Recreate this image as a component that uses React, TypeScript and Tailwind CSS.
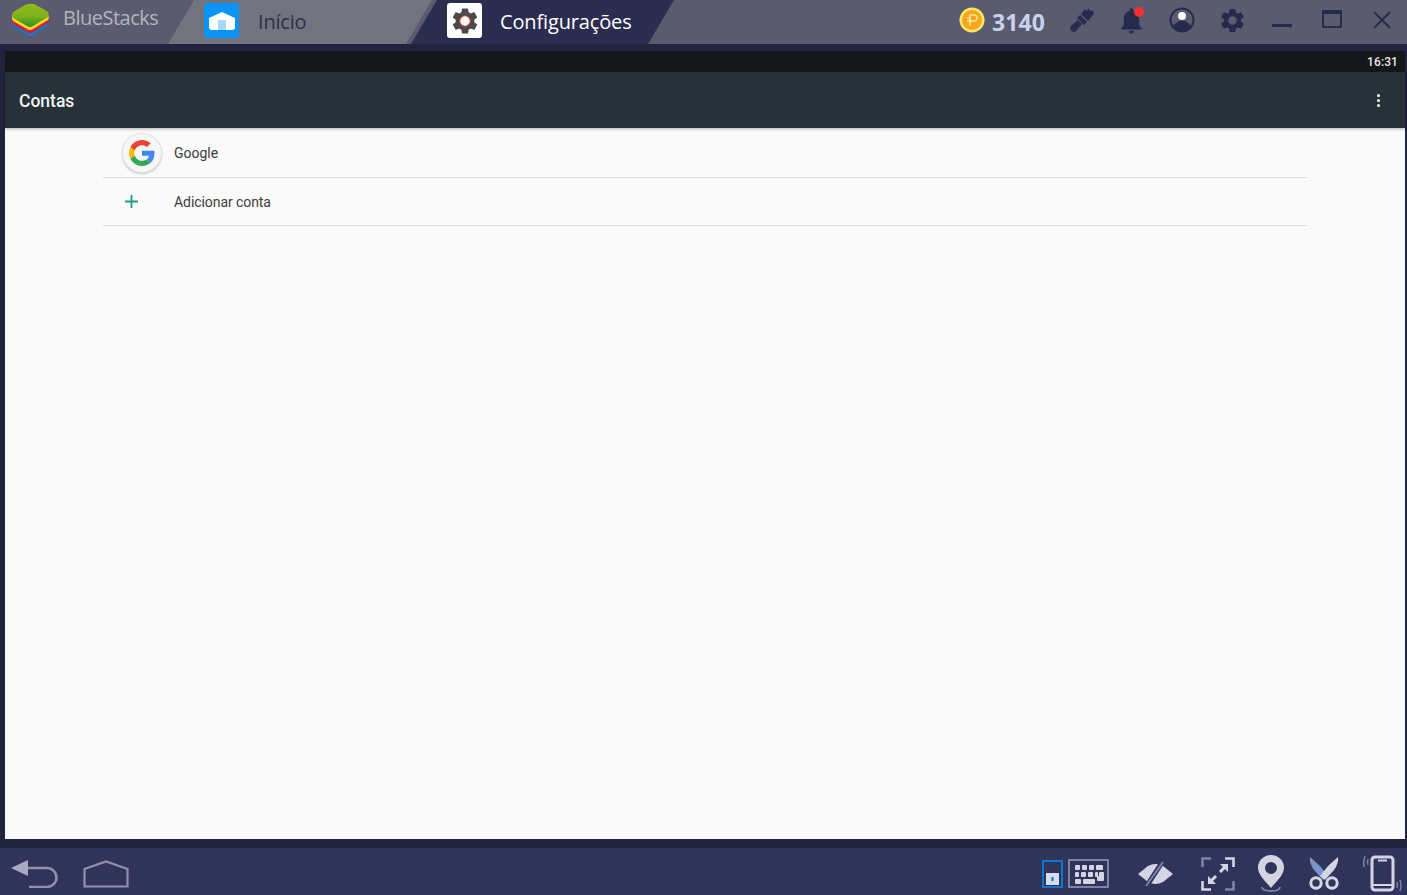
import { MdSettings, MdNotifications } from 'react-icons/md';

// ============================================
// Title bar drawings
// ============================================

const stackLayer = 'M2 9 L14 2 Q18 0 23 1 L36 8 Q39 11 37 14 L22 23 Q19 25 16 23 L2 15 Q0 12 2 9 Z';

function StackLogo() {
  return (
    <svg width="40" height="34" viewBox="0 0 40 34" className="shrink-0">
      <defs>
        <linearGradient id="stackTop" x1="0" y1="0" x2="0" y2="1">
          <stop offset="0" stopColor="#8fbb1c" />
          <stop offset="0.55" stopColor="#7cb01d" />
          <stop offset="1" stopColor="#2f8f22" />
        </linearGradient>
      </defs>
      <path d={stackLayer} transform="translate(0 9)" fill="#1577c4" />
      <path d={stackLayer} transform="translate(0 6)" fill="#e2183a" />
      <path d={stackLayer} transform="translate(0 3)" fill="#f6dc1c" />
      <path d={stackLayer} fill="url(#stackTop)" />
    </svg>
  );
}

function HomeTile() {
  return (
    <div className="mb-[3px] flex h-[35px] w-[35px] shrink-0 items-center justify-center rounded-[3px] bg-[#0a94f5]">
      <svg width="26" height="18" viewBox="0 0 26 18">
        <path d="M0 6 L13 0 L26 6 V15 Q26 18 23 18 H3 Q0 18 0 15 Z" fill="#fff" />
        <rect x="9" y="8" width="8" height="10" fill="#a6d8fa" />
      </svg>
    </div>
  );
}

function GearTile() {
  return (
    <div className="mb-[3px] flex h-[35px] w-[35px] shrink-0 items-center justify-center rounded-[3px] bg-white">
      <svg width="30" height="30" viewBox="0 0 24 24">
        <path
          fill="#4a4a4a"
          d="M19.43 12.98c.04-.32.07-.64.07-.98s-.03-.66-.07-.98l2.11-1.65c.19-.15.24-.42.12-.64l-2-3.46c-.12-.22-.39-.3-.61-.22l-2.49 1c-.52-.4-1.08-.73-1.69-.98l-.38-2.65C14.46 2.18 14.25 2 14 2h-4c-.25 0-.46.18-.49.42l-.38 2.65c-.61.25-1.17.59-1.69.98l-2.49-1c-.23-.09-.49 0-.61.22l-2 3.46c-.13.22-.07.49.12.64l2.11 1.65c-.04.32-.07.65-.07.98s.03.66.07.98l-2.11 1.65c-.19.15-.24.42-.12.64l2 3.46c.12.22.39.3.61.22l2.49-1c.52.4 1.08.73 1.69.98l.38 2.65c.03.24.24.42.49.42h4c.25 0 .46-.18.49-.42l.38-2.65c.61-.25 1.17-.59 1.69-.98l2.49 1c.23.09.49 0 .61-.22l2-3.46c.12-.22.07-.49-.12-.64l-2.11-1.65z"
        />
        <circle cx="12" cy="12" r="4.2" fill="#fff" stroke="#e0392f" strokeWidth="0.9" />
      </svg>
    </div>
  );
}

function Coin() {
  return (
    <svg width="26" height="26" viewBox="0 0 26 26" className="mb-1 shrink-0">
      <circle cx="13" cy="13" r="12.5" fill="#fbe85c" />
      <circle cx="13" cy="13" r="10" fill="#f4a623" />
      <path d="M11 19 V8 H15 A3 3 0 0 1 15 14 H8 M8 11 H11" fill="none" stroke="#fde98a" strokeWidth="1.6" />
    </svg>
  );
}

function Brush() {
  return (
    <svg width="26" height="26" viewBox="0 0 26 26" fill="#262a4d">
      <path d="M2 19 L9 13 L13 17 L7 24 Q5 26 2.500 24 Q0 21.500 2 19 Z" />
      <path d="M8 11 L11 8 L18 15 L15 18 Z" />
      <path d="M12 7 L16 2 L17.500 4 L19.500 1.500 L21 4 L23 3 L25 6 L24 8 L19 14 Z" />
    </svg>
  );
}

function Profile() {
  return (
    <svg width="26" height="26" viewBox="0 0 26 26">
      <circle cx="13" cy="13" r="11.5" fill="none" stroke="#262a4d" strokeWidth="2" />
      <path d="M4 19 Q13 8 22 19 Q18 24 13 24 Q8 24 4 19 Z" fill="#262a4d" />
      <circle cx="13" cy="9" r="4" fill="#fff" />
    </svg>
  );
}

const titleIconBox = 'flex h-11 w-[50px] shrink-0 items-center justify-center pb-1';

// ============================================
// Bottom bar drawings
// ============================================

function BackKey() {
  return (
    <svg width="48" height="28" viewBox="0 0 48 28" fill="none">
      <path d="M0 8 L17 0 V16 Z" fill="#a9acc0" />
      <path d="M17 8 H36 A9.5 9.5 0 0 1 36 27 H18" stroke="#8f92aa" strokeWidth="2.5" />
    </svg>
  );
}

function HomeKey() {
  return (
    <svg width="46" height="28" viewBox="0 0 46 28" fill="none">
      <path d="M1.5 26.5 V9 L23 1.500 L44.500 9 V26.500 Z" stroke="#8f92aa" strokeWidth="2.2" />
    </svg>
  );
}

function ImeToggle() {
  return (
    <svg width="21" height="28" viewBox="0 0 21 28">
      <rect x="1" y="1" width="19" height="26" fill="#30345a" stroke="#0a76d0" strokeWidth="2" />
      <rect x="4" y="13" width="13" height="12" fill="#d6dcec" />
      <rect x="9.500" y="17" width="2" height="4" fill="#0a76d0" />
    </svg>
  );
}

function KeyboardIcon() {
  const keys = [
    [7, 6, 5], [14, 6, 5], [21, 6, 5], [28, 6, 7],
    [7, 13, 4], [13, 13, 5], [20, 13, 5], [27, 13, 3],
    [7, 20, 6], [15, 20, 12], [31, 13, 5], [29, 17, 7],
  ];
  return (
    <svg width="41" height="29" viewBox="0 0 41 29">
      <rect x="1" y="1" width="39" height="27" fill="none" stroke="#7a84a8" strokeWidth="2" />
      {keys.map(([x, y, w]) => (
        <rect key={`${x}-${y}`} x={x} y={y} width={w} height="5" rx="1" fill="#d3d6e2" />
      ))}
    </svg>
  );
}

function EyeOff() {
  return (
    <svg width="35" height="26" viewBox="0 0 35 26">
      <path d="M0 13 L10 5 Q17.500 1 25 5 L35 13 L25 21 Q17.500 25 10 21 Z" fill="#d3d6e2" />
      <path d="M8 26 L25 0" stroke="#30345a" strokeWidth="5" />
      <path d="M8 25 L25 1" stroke="#7a84a8" strokeWidth="2" />
    </svg>
  );
}

function FullscreenIcon() {
  return (
    <svg width="34" height="34" viewBox="0 0 34 34" fill="none" strokeWidth="2.6">
      <path d="M10 1.500 H1.500 V10" stroke="#7a84a8" />
      <path d="M24 1.500 H32.500 V10" stroke="#d3d6e2" />
      <path d="M10 32.500 H1.500 V24" stroke="#d3d6e2" />
      <path d="M24 32.500 H32.500 V24" stroke="#7a84a8" />
      <path d="M19 15 L24 10" stroke="#d3d6e2" strokeWidth="3" />
      <path d="M19 7 H27 V15 Z" fill="#d3d6e2" />
      <path d="M15 19 L10 24" stroke="#d3d6e2" strokeWidth="3" />
      <path d="M7 19 V27 H15 Z" fill="#d3d6e2" />
    </svg>
  );
}

function PinIcon() {
  return (
    <svg width="26" height="37" viewBox="0 0 26 37">
      <path
        fillRule="evenodd"
        fill="#d3d6e2"
        d="M13 0 C5.800 0 0 5.600 0 12.600 C0 20 8 27 13 33 C18 27 26 20 26 12.600 C26 5.600 20.200 0 13 0 Z M13 7 A6 6 0 1 1 13 19 A6 6 0 1 1 13 7 Z"
      />
      <path d="M4 32 Q4 36 13 36 Q22 36 22 32" fill="none" stroke="#7a84a8" strokeWidth="1.800" />
    </svg>
  );
}

function ScissorsIcon() {
  return (
    <svg width="32" height="33" viewBox="0 0 32 33" fill="none">
      <path d="M2 0 L12 9 L20 19 L15 23 L6 13 Q1 6 2 0 Z" fill="#7a95c8" />
      <path d="M30 0 Q31 6 26 13 L17 23 L12 19 L20 9 Z" fill="#d3d6e2" />
      <circle cx="8" cy="26" r="5.200" stroke="#d3d6e2" strokeWidth="3" />
      <circle cx="24" cy="26" r="5.200" stroke="#d3d6e2" strokeWidth="3" />
    </svg>
  );
}

function ShakeIcon() {
  return (
    <svg width="41" height="37" viewBox="0 0 41 37" fill="none">
      <rect x="10" y="2" width="21" height="33" rx="3" stroke="#d3d6e2" strokeWidth="3" />
      <path d="M16 5.500 H25 M10 30 H31" stroke="#d3d6e2" strokeWidth="1.800" />
      <path d="M3 1 Q1 6 2 12 M6 4 Q5 7 6 10" stroke="#7a84a8" strokeWidth="1.500" />
      <path d="M38 25 Q40 30 38 36 M35 27 Q36 30 35 33" stroke="#7a84a8" strokeWidth="1.500" />
    </svg>
  );
}

function GoogleBadge() {
  return (
    <div className="flex h-10 w-10 shrink-0 items-center justify-center rounded-full border border-[#e4e4e4] bg-[#f6f6f6] shadow-[0_1px_2px_rgba(0,0,0,0.2)]">
      <svg width="26" height="26" viewBox="0 0 48 48">
        <path fill="#EA4335" d="M24 9.500c3.500 0 6.700 1.200 9.200 3.600l6.900-6.900C35.900 2.400 30.500 0 24 0 14.600 0 6.500 5.400 2.600 13.200l8 6.200C12.500 13.700 17.800 9.500 24 9.500z" />
        <path fill="#4285F4" d="M47 24.500c0-1.600-.1-3.100-.4-4.500H24v9h13c-.6 3-2.300 5.500-4.800 7.200l7.700 6C44.400 38.500 47 32 47 24.500z" />
        <path fill="#FBBC05" d="M10.500 28.600c-.5-1.400-.8-3-.8-4.600s.3-3.200.8-4.600l-8-6.200C.9 16.500 0 20.100 0 24s.9 7.500 2.600 10.800l7.900-6.200z" />
        <path fill="#34A853" d="M24 48c6.500 0 11.900-2.100 15.900-5.800l-7.700-6c-2.200 1.500-4.900 2.300-8.200 2.300-6.200 0-11.500-4.200-13.400-9.900l-8 6.200C6.500 42.600 14.600 48 24 48z" />
      </svg>
    </div>
  );
}

// ============================================
// App
// ============================================

export default function App() {
  return (
    <div className="flex h-[895px] w-[1407px] flex-col overflow-hidden bg-[#21233f] font-['Roboto',sans-serif]">
      {/* Title bar */}
      <header className="flex h-11 shrink-0 items-center bg-[#5a5b6f] font-['Open_Sans',sans-serif]">
        <div className="flex w-[168px] shrink-0 items-center pb-2 pl-[11px]">
          <div className="mt-1">
            <StackLogo />
          </div>
          <span className="ml-3 text-[20px] tracking-[-0.5px] text-[#b4b5bd]">BlueStacks</span>
        </div>
        <div className="flex h-11 w-[264px] shrink-0 items-center bg-[#72737f] pl-9 [clip-path:polygon(26px_0,100%_0,calc(100%-26px)_100%,0_100%)]">
          <HomeTile />
          <span className="ml-[19px] text-[20px] tracking-[-0.2px] text-[#2c2e4e]">Início</span>
        </div>
        <div className="-ml-[21px] flex h-11 w-[263px] shrink-0 items-center bg-[#2b2d4f] pl-9 [clip-path:polygon(26px_0,100%_0,calc(100%-26px)_100%,0_100%)]">
          <GearTile />
          <span className="ml-[18px] text-[20px] tracking-[-0.15px] text-white">Configurações</span>
        </div>
        <div className="ml-auto flex items-center">
          <Coin />
          <span className="mr-3 ml-[7px] text-[23px] font-bold leading-none tracking-[0.1px] text-[#c8d2ee]">3140</span>
          <div className={titleIconBox}>
            <Brush />
          </div>
          <div className={`${titleIconBox} relative pr-0.5`}>
            <MdNotifications size={31} color="#262a4d" />
            <span className="absolute top-[7px] left-[27px] h-2.5 w-2.5 rounded-full bg-[#f5302e]" />
          </div>
          <div className={titleIconBox}>
            <Profile />
          </div>
          <div className={titleIconBox}>
            <MdSettings size={29} color="#262a4d" />
          </div>
          <div className={titleIconBox}>
            <span className="mt-[10px] h-[3px] w-5 bg-[#262a4d]" />
          </div>
          <div className={titleIconBox}>
            <span className="mb-0.5 h-[18px] w-5 border-2 border-t-4 border-[#262a4d]" />
          </div>
          <div className={titleIconBox}>
            <svg width="18" height="18" viewBox="0 0 18 18" stroke="#262a4d" strokeWidth="2">
              <path d="M1 1 L17 17 M17 1 L1 17" />
            </svg>
          </div>
        </div>
      </header>

      {/* Android screen */}
      <main className="mt-[7px] mr-0.5 ml-[5px] flex h-[788px] min-h-0 flex-col bg-[#fafafa]">
        <div className="flex h-[21px] shrink-0 items-center justify-end bg-[#14181b] pr-[7px] text-xs font-medium tracking-[0.1px] text-[#e8e8e8]">
          16:31
        </div>
        <div className="z-10 flex h-14 shrink-0 items-center justify-between bg-[#263238] pr-[25px] pl-3.5 shadow-[0_1px_3px_rgba(0,0,0,0.3)]">
          <h1 className="mt-[3px] text-[17.5px] font-medium text-[#f2f4f4]">Contas</h1>
          <div className="flex flex-col gap-[2px]">
            <span className="h-[3px] w-[3px] rounded-full bg-white" />
            <span className="h-[3px] w-[3px] rounded-full bg-white" />
            <span className="h-[3px] w-[3px] rounded-full bg-white" />
          </div>
        </div>
        <div className="mr-[98px] ml-[98px] text-sm text-[#3c3c3c]">
          <div className="flex h-[50px] items-center border-b border-[#dedede] pl-[19px]">
            <GoogleBadge />
            <span className="ml-3">Google</span>
          </div>
          <div className="flex h-12 items-center border-b border-[#dedede] pl-[22px]">
            <svg width="13" height="13" viewBox="0 0 13 13" stroke="#1a9a8c" strokeWidth="1.800" className="shrink-0">
              <path d="M6.500 0 V13 M0 6.500 H13" />
            </svg>
            <span className="ml-[36px] tracking-[-0.07px]">Adicionar conta</span>
          </div>
        </div>
      </main>

      {/* Bottom bar */}
      <footer className="mt-[9px] flex h-[47px] shrink-0 items-center bg-[#30345a] pt-1 pr-1 pl-[11px]">
        <BackKey />
        <div className="ml-[24px]">
          <HomeKey />
        </div>
        <div className="ml-auto flex items-center">
          <ImeToggle />
          <div className="ml-[5px]">
            <KeyboardIcon />
          </div>
          <div className="ml-[29px]">
            <EyeOff />
          </div>
          <div className="ml-[28px]">
            <FullscreenIcon />
          </div>
          <div className="ml-[23px]">
            <PinIcon />
          </div>
          <div className="ml-6">
            <ScissorsIcon />
          </div>
          <div className="ml-[22px]">
            <ShakeIcon />
          </div>
        </div>
      </footer>
    </div>
  );
}
